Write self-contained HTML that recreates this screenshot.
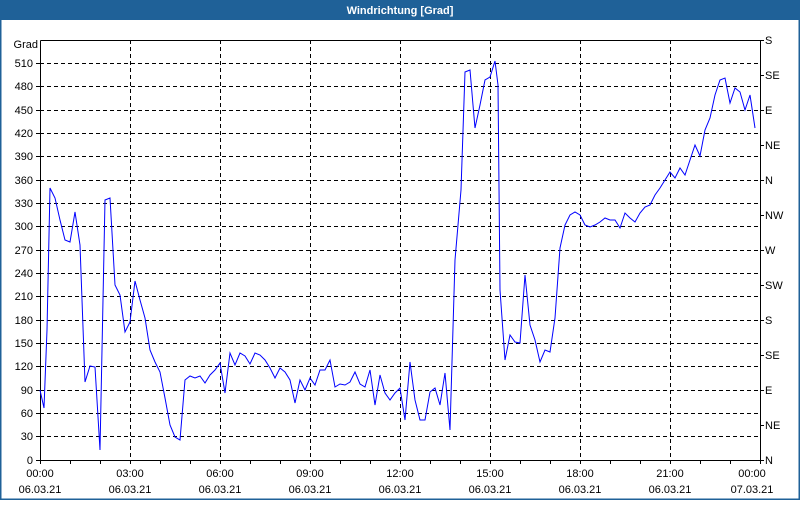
<!DOCTYPE html>
<html><head><meta charset="utf-8"><style>
body{margin:0;width:800px;height:500px;overflow:hidden;background:#fff;font-family:"Liberation Sans",sans-serif}
</style></head><body>
<svg width="800" height="500" xmlns="http://www.w3.org/2000/svg" font-family="Liberation Sans, sans-serif" font-size="11">
<rect x="0" y="0" width="800" height="500" fill="#fff"/>
<rect x="0" y="0" width="800" height="20" fill="#1f6198"/>
<rect x="0" y="0" width="1.5" height="500" fill="#1f6198"/>
<rect x="798.5" y="0" width="1.5" height="500" fill="#1f6198"/>
<rect x="0" y="498.5" width="800" height="1.5" fill="#1f6198"/>
<text x="400" y="14" fill="#fff" font-weight="bold" text-anchor="middle" font-size="11">Windrichtung [Grad]</text>
<g stroke="#000" stroke-width="1" stroke-dasharray="4,3" fill="none">
<path d="M40 63.5H760M40 86.5H760M40 110.5H760M40 133.5H760M40 156.5H760M40 180.5H760M40 203.5H760M40 226.5H760M40 250.5H760M40 273.5H760M40 296.5H760M40 320.5H760M40 343.5H760M40 366.5H760M40 390.5H760M40 413.5H760M40 436.5H760"/>
<path d="M130.5 40V460M220.5 40V460M310.5 40V460M400.5 40V460M490.5 40V460M580.5 40V460M670.5 40V460"/>
</g>
<path d="M40.5 40.5V460.5H760.5V40.5H40.5" stroke="#000" fill="none"/>
<g stroke="#000">
<path d="M36 460.5h4M36 436.5h4M36 413.5h4M36 390.5h4M36 366.5h4M36 343.5h4M36 320.5h4M36 296.5h4M36 273.5h4M36 250.5h4M36 226.5h4M36 203.5h4M36 180.5h4M36 156.5h4M36 133.5h4M36 110.5h4M36 86.5h4M36 63.5h4"/>
<path d="M760 40.5h4M760 75.5h4M760 110.5h4M760 145.5h4M760 180.5h4M760 215.5h4M760 250.5h4M760 285.5h4M760 320.5h4M760 355.5h4M760 390.5h4M760 425.5h4M760 460.5h4"/>
<path d="M40.5 460v4M70.5 460v4M100.5 460v4M130.5 460v4M160.5 460v4M190.5 460v4M220.5 460v4M250.5 460v4M280.5 460v4M310.5 460v4M340.5 460v4M370.5 460v4M400.5 460v4M430.5 460v4M460.5 460v4M490.5 460v4M520.5 460v4M550.5 460v4M580.5 460v4M610.5 460v4M640.5 460v4M670.5 460v4M700.5 460v4M730.5 460v4M760.5 460v4"/>
</g>
<g text-anchor="end" fill="#000">
<text x="38" y="48">Grad</text>
<text x="33" y="67">510</text><text x="33" y="90">480</text><text x="33" y="114">450</text><text x="33" y="137">420</text><text x="33" y="160">390</text><text x="33" y="184">360</text><text x="33" y="207">330</text><text x="33" y="230">300</text><text x="33" y="254">270</text><text x="33" y="277">240</text><text x="33" y="300">210</text><text x="33" y="324">180</text><text x="33" y="347">150</text><text x="33" y="370">120</text><text x="33" y="394">90</text><text x="33" y="417">60</text><text x="33" y="440">30</text><text x="33" y="464">0</text>
</g>
<g fill="#000">
<text x="765" y="44">S</text><text x="765" y="79">SE</text><text x="765" y="114">E</text><text x="765" y="149">NE</text><text x="765" y="184">N</text><text x="765" y="219">NW</text><text x="765" y="254">W</text><text x="765" y="289">SW</text><text x="765" y="324">S</text><text x="765" y="359">SE</text><text x="765" y="394">E</text><text x="765" y="429">NE</text><text x="765" y="464">N</text>
</g>
<g text-anchor="middle" fill="#000">
<text x="40" y="477">00:00</text><text x="40" y="493">06.03.21</text>
<text x="130" y="477">03:00</text><text x="130" y="493">06.03.21</text>
<text x="220" y="477">06:00</text><text x="220" y="493">06.03.21</text>
<text x="310" y="477">09:00</text><text x="310" y="493">06.03.21</text>
<text x="400" y="477">12:00</text><text x="400" y="493">06.03.21</text>
<text x="490" y="477">15:00</text><text x="490" y="493">06.03.21</text>
<text x="580" y="477">18:00</text><text x="580" y="493">06.03.21</text>
<text x="670" y="477">21:00</text><text x="670" y="493">06.03.21</text>
<text x="752" y="477">00:00</text><text x="752" y="493">07.03.21</text>
</g>
<polyline fill="none" stroke="#0000ff" stroke-width="1" points="40,390 44,408 47,330 50,188 55,198 60,220 65,240 70,242 75,212 80,245 85,382 90,366 95,367 100,450 105,200 110,198 115,285 120,295 125,332 130,322 135,281 140,300 145,318 150,350 155,362 160,372 165,398 170,425 175,437 180,440 185,380 190,376 195,378 200,376 205,383 210,375 215,370 220,363 225,393 230,353 235,365 240,353 245,356 250,364 255,353 260,355 265,360 270,368 275,378 280,368 285,372 290,380 295,403 300,380 305,390 310,378 315,385 320,370 325,370 330,360 335,387 340,384 345,385 350,382 355,372 360,384 365,387 370,370 375,405 380,375 385,393 390,400 395,393 400,388 405,420 410,362 415,400 420,420 425,420 430,392 435,388 440,405 445,373 450,430 455,260 461,190 465,72 470,70 473,105 475,128 480,105 485,80 490,77 495,61 498,85 500,290 505,360 510,335 515,342 520,343 525,275 530,325 535,340 540,362 545,350 550,352 555,318 560,248 565,225 570,215 575,212 580,215 585,225 590,227 595,225 600,222 605,218 610,220 615,220 620,228 625,213 630,218 635,222 640,213 645,207 650,205 655,195 660,188 665,180 670,172 675,178 680,168 685,175 690,160 695,145 700,156 705,130 710,118 715,95 720,80 725,78 730,103 735,88 740,92 745,110 750,95 755,128"/>
</svg>
</body></html>
